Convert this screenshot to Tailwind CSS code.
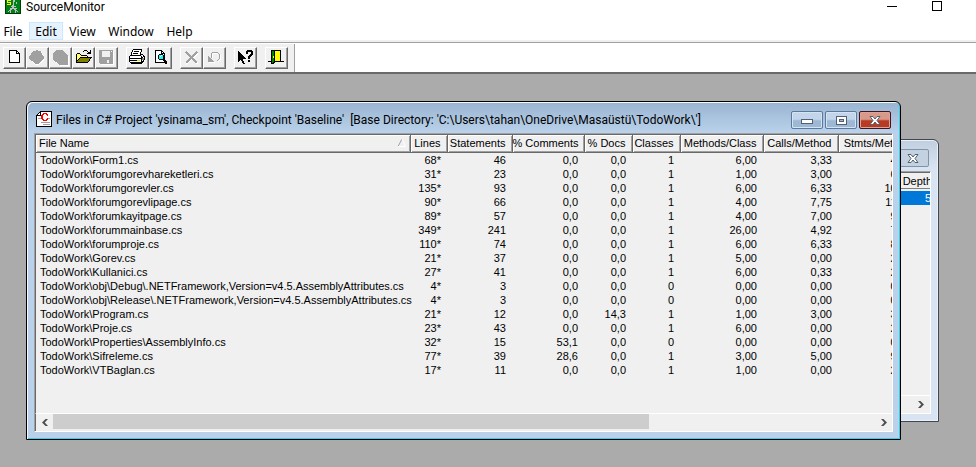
<!DOCTYPE html>
<html lang="en">
<head>
<meta charset="utf-8">
<title>SourceMonitor</title>
<script src="https://cdn.jsdelivr.net/npm/@tailwindcss/browser@4"></script>
</head>
<body class="flex h-screen flex-col overflow-hidden bg-[#ababab] font-['Noto_Sans','Open_Sans',sans-serif] text-xs text-black">

<header class="flex h-[22px] shrink-0 items-start justify-between bg-white">
  <div class="flex items-start gap-[5px] pl-[5px]">
    <svg class="h-[14px] w-4" viewBox="0 2 16 14" shape-rendering="crispEdges" aria-hidden="true">
      <rect width="16" height="16" fill="#003c00"/><rect x="1" y="1" width="14" height="14" fill="#008018"/>
      <path d="M2 2h4v1H3v1h3v3H2V6h3V5H2z" fill="#ffff00"/>
      <path d="M8 2v5M8 7l-3 8M8 7l3 8M5 10h7M3 14l5-4l5 4M6 8h5" stroke="#c0c0c0" fill="none"/>
      <path d="M9 2h1v2H9zM11 4h1v2h-1z" fill="#b0c8b0"/>
    </svg>
    <h1 class="font-[Roboto,sans-serif] leading-[14px]">SourceMonitor</h1>
  </div>
  <div class="flex h-[14px] gap-8 pr-[33px]">
    <button aria-label="Minimize" class="flex w-3 items-center"><svg class="h-[14px] w-3" viewBox="0 0 12 14" shape-rendering="crispEdges"><path d="M0 6h10v1H0z"/></svg></button>
    <button aria-label="Maximize" class="flex w-3 items-center"><svg class="h-[14px] w-3" viewBox="0 0 12 14" shape-rendering="crispEdges"><path d="M1.500 1.500h9v9h-9z" fill="none" stroke="#000"/></svg></button>
  </div>
</header>

<nav class="flex h-5 shrink-0 border-b-2 border-[#f0f0f0] bg-white leading-[17px]">
  <button class="w-[29px] pr-[3px]">File</button>
  <button class="w-[34px] border border-[#cce8ff] bg-[#e5f3ff]">Edit</button>
  <button class="w-[39px]">View</button>
  <button class="w-[58px]">Window</button>
  <button class="w-[39px]">Help</button>
</nav>

<div class="flex h-8 shrink-0 border-t border-b-2 border-t-[#a0a0a0] border-b-[#696969] bg-white">
  <div class="mt-px flex gap-2 border-r border-r-[#a0a0a0] bg-[#f0f0f0] pt-[3px] pr-[6px] pl-[3px]">
    <div class="flex">
      <button aria-label="New" class="h-[22px] border border-t-white border-l-white border-r-[#696969] border-b-[#696969] shadow-[inset_-1px_-1px_#a0a0a0]"><svg class="h-5 w-[21px]" viewBox="1 1 21 20" shape-rendering="crispEdges"><path d="M6.500 3.500h7l3 3v9h-10z" fill="#fff" stroke="#000"/><path d="M13 3h1v3h3v1h-4z"/></svg></button>
      <button aria-label="New checkpoint" disabled class="h-[22px] border border-t-white border-l-white border-r-[#696969] border-b-[#696969] shadow-[inset_-1px_-1px_#a0a0a0]"><svg class="h-5 w-[21px]" viewBox="1 1 21 20" shape-rendering="crispEdges"><path d="M11 4h1l1 1h3v2l2 2v4l-3 3-3 2h-2l-3-2-3-3-1-2 2-3 2-3z" fill="#fff"/><path d="M10 3h1l1 1h3v1l2 4h1v2l-3 3-3 3h-3l-3-3-3-2v-2l2-3 2-3h2z" fill="#a0a0a0"/></svg></button>
      <button aria-label="Copy checkpoint" disabled class="h-[22px] border border-t-white border-l-white border-r-[#696969] border-b-[#696969] shadow-[inset_-1px_-1px_#a0a0a0]"><svg class="h-5 w-[21px]" viewBox="1 1 21 20" shape-rendering="crispEdges"><path d="M8 4h6l3 3 3 3v9h-9l-2-3H7l-2-3V7z" fill="#fff"/><path d="M7 3h6l3 3 3 3v9h-9l-2-3H6l-2-3V6z" fill="#a0a0a0"/></svg></button>
      <button aria-label="Open" class="h-[22px] border border-t-white border-l-white border-r-[#696969] border-b-[#696969] shadow-[inset_-1px_-1px_#a0a0a0]"><svg class="h-5 w-[21px]" viewBox="1 1 21 20" shape-rendering="crispEdges"><path d="M5 7h3l1 1h6v3H9l-4 5z" fill="#ffff70"/><path d="M5 6h3v1H5zM4 7h1v9H4zM8 7h1v1H8zM9 8h6v1H9zM15 9h1v1h-1zM4 15h12v1H4zM8 10h12v1H8zM7 11h1v1H7zM6 12h1v1H6zM5 13h1v2H5zM18 11h1v1h-1zM17 12h1v2h-1zM16 14h1v1h-1zM12 3h3v1h-3zM11 4h1v1h-1zM15 4h1v1h-1zM16 5h2v2h-2zM18 3h1v4h-1zM15 6h4v1h-4z"/><path d="M8 11h10v1H8zM7 12h10v1H7zM6 13h11v1H6zM5 14h11v1H5z" fill="#808000"/></svg></button>
      <button aria-label="Save" disabled class="h-[22px] border border-t-white border-l-white border-r-[#696969] border-b-[#696969] shadow-[inset_-1px_-1px_#a0a0a0]"><svg class="h-5 w-[21px]" viewBox="1 1 21 20" shape-rendering="crispEdges"><path d="M5 4h14v14H6l-1-1z" fill="#fff"/><path d="M4 3h14v14H5l-1-1z" fill="#a0a0a0"/><path d="M7 4h8v6H7zM16 4h1v1h-1zM12 13h2v3h-2z" fill="#f0f0f0"/></svg></button>
    </div>
    <div class="flex">
      <button aria-label="Print" class="h-[22px] border border-t-white border-l-white border-r-[#696969] border-b-[#696969] shadow-[inset_-1px_-1px_#a0a0a0]"><svg class="h-5 w-[21px]" viewBox="1 1 21 20" shape-rendering="crispEdges"><path d="M7 3h9l-2 6h3l2 1v4l-3 3H5l-2-2v-4l3-2z" fill="#fff"/><path d="M7 2h9v1H7zM6 3h1v2H6zM5 5h1v3H5zM15 3h1v2h-1zM14 5h1v3h-1zM8 4h5v1H8zM7 6h5v1H7zM4 8h11v1H4zM3 9h1v6H3zM15 7h2v1h-2zM17 8h1v2h-1zM3 11h12v1H3zM15 9h1v7h-1zM16 10h1v1h-1zM18 9h1v4h-1zM17 13h1v2h-1zM4 15h12v1H4zM5 16h11v1H5zM16 14h1v2h-1zM4 13h7v1H4z"/><path d="M16 11h2v2h-2z" fill="#808080"/><path d="M11 13h3v1h-3z" fill="#e0e000"/></svg></button>
      <button aria-label="Print preview" class="h-[22px] border border-t-white border-l-white border-r-[#696969] border-b-[#696969] shadow-[inset_-1px_-1px_#a0a0a0]"><svg class="h-5 w-[21px]" viewBox="1 1 21 20" shape-rendering="crispEdges"><path d="M6.500 3.500h6l3 3v9h-9z" fill="#fff" stroke="#000"/><path d="M12 3h1v3h3v1h-4zM10 7h4v1h-4zM9 8h1v4H9zM14 8h1v4h-1zM10 12h4v1h-4zM14 12h2v2h-2zM15 13h2v2h-2zM16 14h2v3h-2z"/><path d="M10 8h4v4h-4z" fill="#00ffff"/><path d="M12 8h1v1h-1zM11 9h1v1h-1z" fill="#fff"/></svg></button>
    </div>
    <div class="flex">
      <button aria-label="Delete" disabled class="h-[22px] border border-t-white border-l-white border-r-[#696969] border-b-[#696969] shadow-[inset_-1px_-1px_#a0a0a0]"><svg class="h-5 w-[21px]" viewBox="1 1 21 20" shape-rendering="crispEdges"><path d="M7 6l11 11M18 6L6 17" stroke="#fff" stroke-width="2"/><path d="M6 5l11 11M17 5L6 16" stroke="#a0a0a0" stroke-width="2"/></svg></button>
      <button aria-label="Undo" disabled class="h-[22px] border border-t-white border-l-white border-r-[#696969] border-b-[#696969] shadow-[inset_-1px_-1px_#a0a0a0]"><svg class="h-5 w-[21px]" viewBox="1 1 21 20" shape-rendering="crispEdges"><path d="M9 11V8l2-2h4l2 2v5l-2 2" fill="none" stroke="#fff"/><path d="M6 10l6 6H6z" fill="#fff"/><path d="M8 11V7l2-2h4l2 2v5l-2 2" fill="none" stroke="#a0a0a0"/><path d="M5 9l6 6H5z" fill="#a0a0a0"/></svg></button>
    </div>
    <div class="flex">
      <button aria-label="Context help" class="h-[22px] border border-t-white border-l-white border-r-[#696969] border-b-[#696969] shadow-[inset_-1px_-1px_#a0a0a0]"><svg class="h-5 w-[21px]" viewBox="1 1 21 20" shape-rendering="crispEdges"><path d="M4 4h1v1h1v1h1v1h1v1h1v1h1v1h1v1h1v1H9v2h1v2h1v1H9v-1H8v-2H7v-1H6v1H5v1H4zM13 3h5v1h1v4h-1v1h-1v1h-1v2h-2V9h1V8h1V7h1V5h-3v2h-2V4h1zM14 13h2v2h-2z"/></svg></button>
    </div>
    <div class="flex">
      <button aria-label="Exit" class="h-[22px] border border-t-white border-l-white border-r-[#696969] border-b-[#696969] shadow-[inset_-1px_-1px_#a0a0a0]"><svg class="h-5 w-[21px]" viewBox="1 1 21 20" shape-rendering="crispEdges"><path d="M6 3h10v12H6zM3 14h16v1H3z"/><path d="M10 4h5v10h-5z" fill="#ffff00"/><path d="M6 4h1V3h3v12l-2 2H6z" fill="#000"/><path d="M7 4h2v11l-2 1z" fill="#008000"/><path d="M8 9h1v2H8z" fill="#ffff00"/></svg></button>
    </div>
  </div>
</div>

<main class="relative min-h-0 flex-1 font-['Liberation_Sans',Arial,sans-serif] text-[11px]">
  <!-- Inactive checkpoint window behind the file list -->
  <section class="absolute top-[65px] left-[65px] flex h-[283px] w-[874px] flex-col rounded-t-[6px] border border-[#43474d] bg-gradient-to-b from-[#c0cedf] to-[#d8e4f1] to-10% px-[7px] pb-[7px] shadow-[inset_0_0_0_1px_#e9f1f9]">
    <div class="flex h-[31px] shrink-0 items-start justify-end pt-[9px] pr-[2px]">
      <button aria-label="Close checkpoint window" class="flex h-[18px] w-8 items-center justify-center rounded-[2px] border border-[#8293a9] bg-[#c4d1e1]"><svg class="h-[9px] w-3" viewBox="0 0 12 9"><path d="M1 .5h3L6 3 8 .5h3L8 4.500 11 8.500H8L6 6 4 8.500H1L4 4.500z" fill="#fff" stroke="#53606e"/></svg></button>
    </div>
    <div class="flex min-h-0 flex-1 flex-col overflow-hidden border border-t-[#a0a0a0] border-l-[#a0a0a0] border-r-white border-b-white bg-[#f0f0f0]">
      <div class="flex h-[17px] shrink-0 justify-end border-t border-b border-t-[#696969] border-b-[#808080] leading-[17px]"><span class="-mr-[2px]">Depth</span></div>
      <div class="mt-[2px] flex h-[14px] shrink-0 justify-end bg-[#0078d7] leading-[14px] text-white"><span class="-mr-px">5</span></div>
      <div class="flex-1"></div>
      <div class="flex h-[18px] shrink-0 items-center justify-end border-t border-white pr-[6px]"><svg class="h-[7px] w-[6px]" viewBox="0 0 6 7"><path d="M0 0h2.500L6 3.500 2.500 7H0l3.200-3.500z" fill="#505050"/></svg></div>
    </div>
  </section>

  <!-- Active file list window -->
  <section class="absolute top-[27px] left-[26px] flex h-[339px] w-[875px] flex-col rounded-t-[6px] border border-black bg-[linear-gradient(#99b4d1,#b9d1ea_30px)] px-[7px] pb-[7px] shadow-[inset_1px_1px_#f4f9fd,inset_-1px_-1px_#34d0e8]">
    <div class="flex h-[31px] shrink-0 items-start justify-between pr-[2px]">
      <div class="flex gap-1 pt-[9px] pl-[2px]">
        <svg class="h-4 w-4" viewBox="0 0 16 16" shape-rendering="crispEdges" aria-hidden="true"><path d="M4.500.5h11v15H.5v-11z" fill="#fff" stroke="#000"/><path d="M4 1h1v4H1V4h3zM0 4h2v1H0zM2 2h1v1H2z"/><path d="M2 7.500h3M11 7.500h3M5 11.500h9M7 13.500h7" stroke="#a0a0a0" fill="none"/><path d="M7 2h4v1h1v2h-1V4h-1V3H8v1H7v4h1v1h2V8h1V7h1v2h-1v1H7V9H6V8H5V4h1V3h1z" fill="#f00"/></svg>
        <h2 class="font-[Roboto,sans-serif] text-xs leading-[18px] whitespace-pre">Files in C# Project 'ysinama_sm', Checkpoint 'Baseline'  [Base Directory: 'C:\Users\tahan\OneDrive\Masaüstü\TodoWork\']</h2>
      </div>
      <div class="flex gap-[2px] pt-[9px]">
        <button aria-label="Minimize window" class="flex h-[18px] w-8 items-center justify-center rounded-[2px] border border-[#5d7899] bg-gradient-to-b from-[#c2d5ea] from-45% to-[#9db8d5] to-55% shadow-[inset_0_0_0_1px_#d5e4f3]"><svg class="mt-[3px] h-[5px] w-3" viewBox="0 0 12 5" shape-rendering="crispEdges"><path d="M.5.5h11v4H.5z" fill="#fff" stroke="#53606e"/></svg></button>
        <button aria-label="Maximize window" class="flex h-[18px] w-8 items-center justify-center rounded-[2px] border border-[#5d7899] bg-gradient-to-b from-[#c2d5ea] from-45% to-[#9db8d5] to-55% shadow-[inset_0_0_0_1px_#d5e4f3]"><svg class="h-[9px] w-[11px]" viewBox="0 0 11 9" shape-rendering="crispEdges"><path d="M.5.5h10v8H.5z" fill="#fff" stroke="#53606e"/><path d="M3.500 3.500h4v2h-4z" fill="#9db8d5" stroke="#53606e"/></svg></button>
        <button aria-label="Close window" class="flex h-[18px] w-8 items-center justify-center rounded-[2px] border border-[#431420] bg-gradient-to-b from-[#d9998a] from-45% to-[#b83a22] to-55% shadow-[inset_0_0_0_1px_#e0a293]"><svg class="h-[9px] w-3" viewBox="0 0 12 9"><path d="M1 .5h3L6 3 8 .5h3L8 4.500 11 8.500H8L6 6 4 8.500H1L4 4.500z" fill="#fff" stroke="#53606e"/></svg></button>
      </div>
    </div>
    <div class="flex min-h-0 flex-1 flex-col overflow-hidden border border-t-[#a0a0a0] border-l-[#a0a0a0] border-r-white border-b-white bg-[#f0f0f0]">
      <div class="min-h-0 flex-1 overflow-hidden border-t border-l border-[#696969]">
        <table class="w-[882px] table-fixed border-collapse">
          <colgroup><col class="w-[374px]"><col class="w-[37px]"><col class="w-[65px]"><col class="w-[72px]"><col class="w-[48px]"><col class="w-[48px]"><col class="w-[83px]"><col class="w-[75px]"><col class="w-[80px]"></colgroup>
          <thead><tr id="heads" class="h-[17px]"></tr></thead>
          <tbody id="files"></tbody>
        </table>
      </div>
      <div class="flex h-[18px] shrink-0 items-start border-t border-l border-t-white border-l-[#696969]">
        <button aria-label="Scroll left" class="flex h-4 w-[17px] items-center justify-center"><svg class="h-[7px] w-[6px]" viewBox="0 0 6 7"><path d="M6 0H3.500L0 3.500 3.500 7H6L2.800 3.500z" fill="#505050"/></svg></button>
        <div class="flex-1"><div class="h-[15px] w-29/40 bg-[#cdcdcd]"></div></div>
        <button aria-label="Scroll right" class="flex h-4 w-[17px] items-center justify-center"><svg class="h-[7px] w-[6px]" viewBox="0 0 6 7"><path d="M0 0h2.500L6 3.500 2.500 7H0l3.200-3.500z" fill="#505050"/></svg></button>
      </div>
    </div>
  </section>
</main>

<script>
const heads = ['File Name', 'Lines', 'Statements', '% Comments', '% Docs', 'Classes', 'Methods/Class', 'Calls/Method', 'Stmts/Method'];
const files = [
  ['Form1.cs', '68*', '46', '0,0', '0,0', '1', '6,00', '3,33', '4,83'],
  ['forumgorevhareketleri.cs', '31*', '23', '0,0', '0,0', '1', '1,00', '3,00', '6,00'],
  ['forumgorevler.cs', '135*', '93', '0,0', '0,0', '1', '6,00', '6,33', '10,67'],
  ['forumgorevlipage.cs', '90*', '66', '0,0', '0,0', '1', '4,00', '7,75', '11,00'],
  ['forumkayitpage.cs', '89*', '57', '0,0', '0,0', '1', '4,00', '7,00', '9,75'],
  ['forummainbase.cs', '349*', '241', '0,0', '0,0', '1', '26,00', '4,92', '7,15'],
  ['forumproje.cs', '110*', '74', '0,0', '0,0', '1', '6,00', '6,33', '8,00'],
  ['Gorev.cs', '21*', '37', '0,0', '0,0', '1', '5,00', '0,00', '2,00'],
  ['Kullanici.cs', '27*', '41', '0,0', '0,0', '1', '6,00', '0,33', '2,00'],
  ['obj\\Debug\\.NETFramework,Version=v4.5.AssemblyAttributes.cs', '4*', '3', '0,0', '0,0', '0', '0,00', '0,00', '0,00'],
  ['obj\\Release\\.NETFramework,Version=v4.5.AssemblyAttributes.cs', '4*', '3', '0,0', '0,0', '0', '0,00', '0,00', '0,00'],
  ['Program.cs', '21*', '12', '0,0', '14,3', '1', '1,00', '3,00', '3,00'],
  ['Proje.cs', '23*', '43', '0,0', '0,0', '1', '6,00', '0,00', '2,00'],
  ['Properties\\AssemblyInfo.cs', '32*', '15', '53,1', '0,0', '0', '0,00', '0,00', '0,00'],
  ['Sifreleme.cs', '77*', '39', '28,6', '0,0', '1', '3,00', '5,00', '9,00'],
  ['VTBaglan.cs', '17*', '11', '0,0', '0,0', '1', '1,00', '0,00', '2,00'],
];
const sort = '<svg class="h-2 w-2" viewBox="0 0 8 8"><path d="M0 7.500L4 0" stroke="#a0a0a0"/><path d="M4 0l3.500 7.500H0" fill="none" stroke="#fff"/></svg>';
document.getElementById('heads').innerHTML = heads.map((h, i) => i
  ? `<th class="border-r border-b border-[#696969] p-0 pr-[6px] text-right leading-4 font-normal whitespace-nowrap shadow-[inset_1px_1px_#fff,inset_-1px_-1px_#a0a0a0]">${h}</th>`
  : `<th class="border-r border-b border-[#696969] p-0 pr-1 pl-[3px] text-left leading-4 font-normal shadow-[inset_1px_1px_#fff,inset_-1px_-1px_#a0a0a0]"><span class="flex items-center justify-between">${h}${sort}</span></th>`).join('');
document.getElementById('files').innerHTML = files.map(r => '<tr>' + r.map((v, i) => i
  ? `<td class="p-0 pr-[6px] text-right leading-[14px] whitespace-nowrap">${v}</td>`
  : `<td class="p-0 pl-1 leading-[14px] whitespace-nowrap">TodoWork\\${v}</td>`).join('') + '</tr>').join('');
</script>
</body>
</html>
